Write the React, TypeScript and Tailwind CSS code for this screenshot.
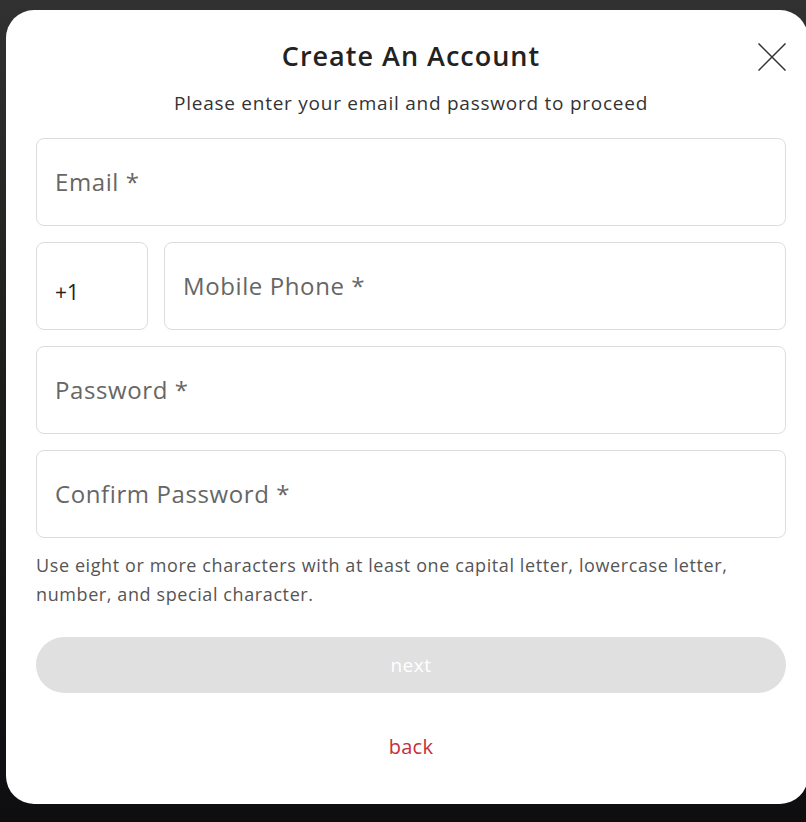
import React from "react";

function Field({ label }: { label: string }) {
  return (
    <div className="h-[88px] flex items-center rounded-lg border border-[#dddddd] bg-white px-[18px]">
      <span className="text-[24px] tracking-[0.6px] text-[#666666]">{label}</span>
    </div>
  );
}

export default function App() {
  return (
    <div
      className="w-[806px] h-[822px] overflow-hidden bg-gradient-to-b from-[#313131] via-[#1c1c1a] to-[#0e0d10] pt-[10px] pl-[6px]"
      style={{ fontFamily: '"Open Sans", "Liberation Sans", sans-serif' }}
    >
      <div className="w-[802px] h-[794px] rounded-[28px] bg-white pt-[29px] pl-[30px] pr-[22px] flex flex-col">
        <div className="relative flex flex-col items-center">
          <h1 className="text-[27px] leading-[34px] tracking-[1px] font-semibold text-[#222222]">Create An Account</h1>
          <p className="mt-[18px] text-[19px] leading-[24px] tracking-[0.75px] text-[#333333]">
            Please enter your email and password to proceed
          </p>
          <button className="absolute right-[-1px] top-[3px] w-[30px] h-[30px] flex items-center justify-center">
            <svg width="28" height="28" viewBox="0 0 28 28" fill="none" stroke="#333" strokeWidth="1.5">
              <path d="M0.5 0.5L27.5 27.5M27.5 0.5L0.5 27.5" />
            </svg>
          </button>
        </div>
        <div className="mt-[23px] flex flex-col gap-[16px]">
          <Field label="Email *" />
          <div className="flex gap-[16px]">
            <div className="w-[112px] h-[88px] rounded-lg border border-[#dddddd] flex items-center px-[18px] pt-[14px]">
              <span className="text-[21px] text-[#222]">+1</span>
            </div>
            <div className="flex-1">
              <Field label="Mobile Phone *" />
            </div>
          </div>
          <Field label="Password *" />
          <Field label="Confirm Password *" />
        </div>
        <p className="mt-[13px] text-[18px] leading-[29px] tracking-[0.6px] text-[#555555]">
          Use eight or more characters with at least one capital letter, lowercase letter, number, and special character.
        </p>
        <button className="mt-[28px] h-[56px] w-full rounded-full bg-[#e0e0e0] text-white text-[19px] tracking-[0.5px]">next</button>
        <button className="mt-[39px] self-center text-[20px] tracking-[0.3px] text-[#c4303a]">back</button>
      </div>
    </div>
  );
}
